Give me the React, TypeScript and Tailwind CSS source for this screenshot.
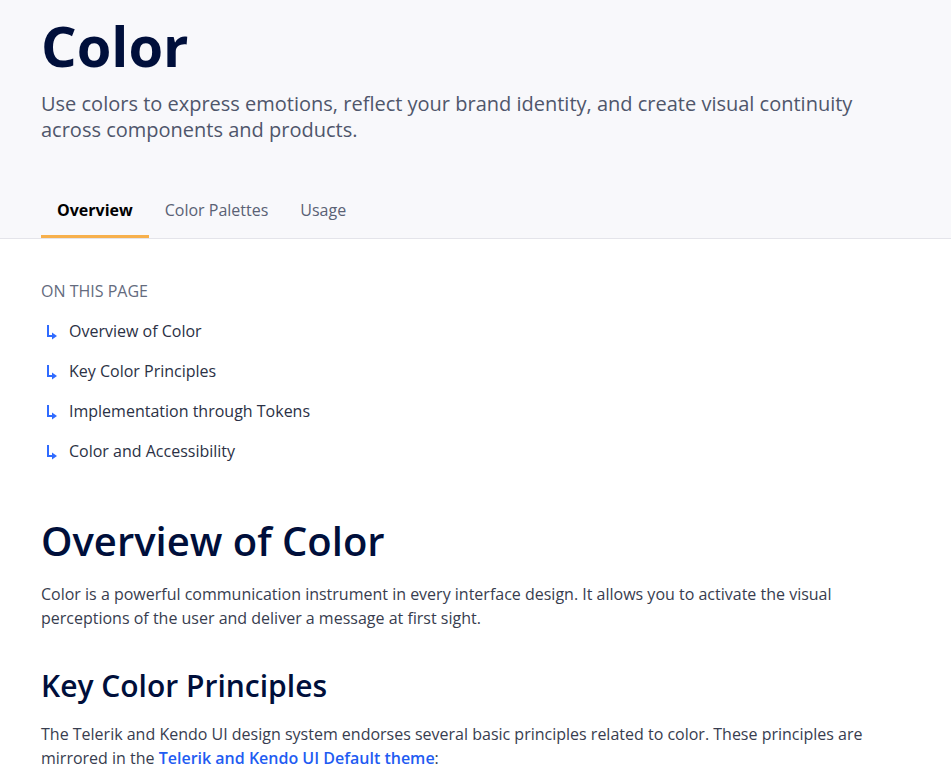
const toc = [
  "Overview of Color",
  "Key Color Principles",
  "Implementation through Tokens",
  "Color and Accessibility",
];

function TocArrow() {
  return (
    <svg width="12" height="15" viewBox="0 0 12 15" className="mt-[3px] shrink-0 text-[#2f6bff]" fill="currentColor">
      <rect x="1" y="0" width="2" height="12" />
      <rect x="1" y="10" width="6" height="2" />
      <path d="M6 7.5L11 11L6 14.5Z" />
    </svg>
  );
}

export default function App() {
  return (
    <div className="min-h-screen bg-white font-['Open_Sans',sans-serif] text-[#1e2437]">
      <header className="border-b border-[#e4e4ea] bg-[#f8f8fb] px-[41px]">
        <h1 className="pt-[6px] text-[56px] font-bold leading-[78px] text-[#000f3b]">Color</h1>
        <p className="mt-[7px] max-w-[830px] text-[20px] leading-[26px] text-[#4f566b]">
          Use colors to express emotions, reflect your brand identity, and create visual continuity
          across components and products.
        </p>
        <nav className="mt-[52px] flex">
          <a className="border-b-[3px] border-[#f7b04c] px-4 pb-[13px] pt-[3px] text-[16px] font-bold text-black">
            Overview
          </a>
          <a className="border-b-[3px] border-transparent px-4 pb-[13px] pt-[3px] text-[16px] text-[#5a6175]">
            Color Palettes
          </a>
          <a className="border-b-[3px] border-transparent px-4 pb-[13px] pt-[3px] text-[16px] text-[#5a6175]">
            Usage
          </a>
        </nav>
      </header>

      <main className="px-[41px] pt-[40px]">
        <div className="text-[16px] uppercase leading-[24px] text-[#646b7e]">On this page</div>
        <ul className="mt-[8px]">
          {toc.map((t) => (
            <li key={t} className="flex h-[40px] items-center gap-[11px] pl-[5px] text-[16px] text-[#2b3145]">
              <TocArrow />
              <span>{t}</span>
            </li>
          ))}
        </ul>

        <h2 className="mt-[42px] text-[40px] font-semibold leading-[56px] text-[#000f3b]">Overview of Color</h2>
        <p className="mt-[13px] max-w-[820px] text-[16px] leading-[24px] text-[#383d4f]">
          Color is a powerful communication instrument in every interface design. It allows you to activate the
          visual perceptions of the user and deliver a message at first sight.
        </p>

        <h3 className="mt-[36px] text-[30px] font-semibold leading-[40px] text-[#000f3b]">Key Color Principles</h3>
        <p className="mt-[16px] max-w-[840px] text-[16px] leading-[24px] text-[#383d4f]">
          The Telerik and Kendo UI design system endorses several basic principles related to color. These principles
          are mirrored in the{" "}
          <a className="font-semibold text-[#1f5cf2]">Telerik and Kendo UI Default theme</a>:
        </p>
      </main>
    </div>
  );
}
